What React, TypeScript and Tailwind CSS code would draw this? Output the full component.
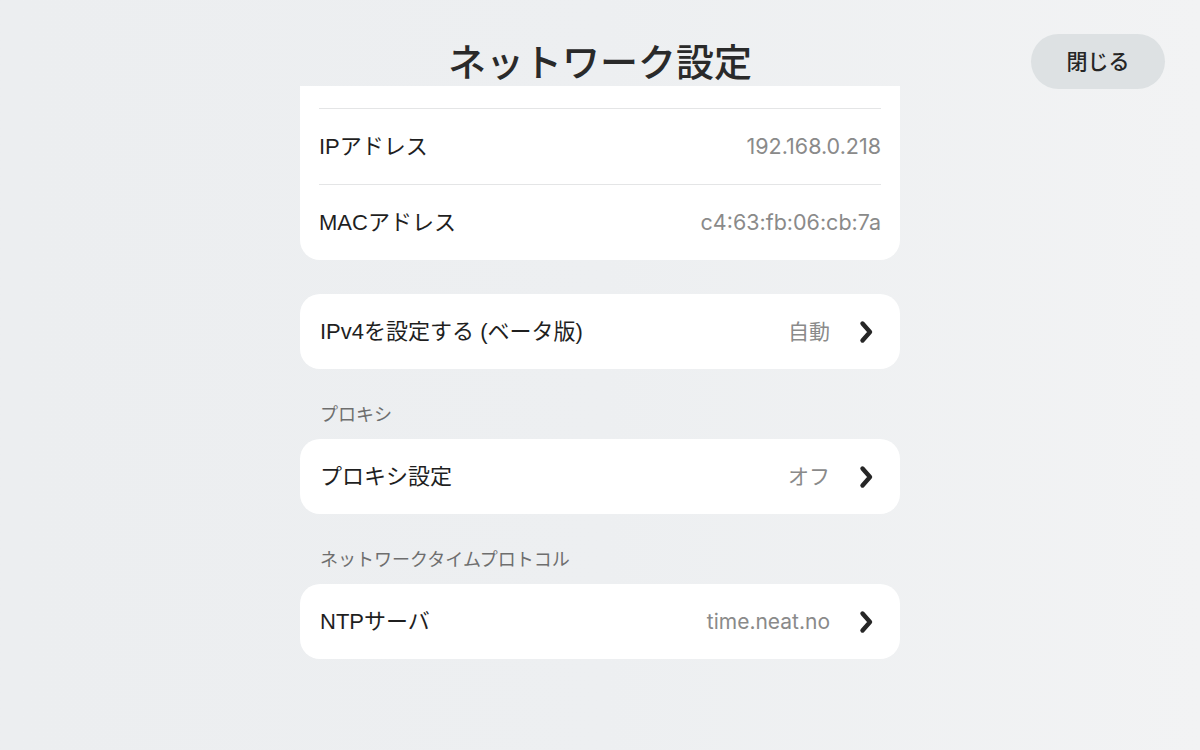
import React from "react";

const font = { fontFamily: '"Liberation Sans", "Noto Sans CJK JP", sans-serif' };
const valueFont = { fontFamily: '"Inter", "Noto Sans CJK JP", sans-serif' };

const Chevron: React.FC = () => (
  <svg width="26" height="26" viewBox="0 0 26 26" className="shrink-0">
    <path
      d="M9.5 4.5 L17 13 L9.5 21.5"
      fill="none"
      stroke="#262626"
      strokeWidth="4.4"
      strokeLinecap="round"
      strokeLinejoin="round"
    />
  </svg>
);

const InfoRow: React.FC<{ label: string; value: string; divider?: boolean }> = ({
  label,
  value,
  divider,
}) => (
  <div className={`flex h-[76px] items-center justify-between ${divider ? "border-t border-[#e4e5e6]" : ""}`}>
    <span className="text-[22px] text-[#1f1f1f]">{label}</span>
    <span className="text-[21.5px] text-[#8a8a8a]" style={valueFont}>
      {value}
    </span>
  </div>
);

const LinkCard: React.FC<{ label: string; value: string }> = ({ label, value }) => (
  <div className="flex h-[75px] items-center justify-between rounded-[20px] bg-white pl-5 pr-[21px]">
    <span className="text-[22px] text-[#1f1f1f]">{label}</span>
    <div className="flex items-center gap-[23px]">
      <span className="text-[21px] text-[#8a8a8a]" style={valueFont}>
        {value}
      </span>
      <Chevron />
    </div>
  </div>
);

const SectionLabel: React.FC<{ children: React.ReactNode }> = ({ children }) => (
  <div className="px-5 pb-[12px] pt-[34px] text-[18px] leading-[24px] text-[#6e6e6e]">{children}</div>
);

export default function App() {
  return (
    <div
      className="h-[750px] w-[1200px] overflow-hidden bg-gradient-to-r from-[#eceef0] via-[#edeff1] to-[#f2f3f4]"
      style={font}
    >
      {/* Header */}
      <div className="relative flex h-[86px] items-end justify-center">
        <h1 className="text-[38px] font-medium leading-[46px] text-[#2a2a2a]">ネットワーク設定</h1>
        <button className="absolute right-[35px] top-[34px] flex h-[55px] w-[134px] items-center justify-center rounded-full bg-[#dde1e3] text-[21px] font-medium text-[#262626]">
          閉じる
        </button>
      </div>

      <div className="mx-auto w-[600px]">
        {/* Scrolled info card (top cut under header) */}
        <div className="rounded-b-[20px] bg-white px-[19px] pt-[22px]">
          <InfoRow label="IPアドレス" value="192.168.0.218" divider />
          <InfoRow label="MACアドレス" value="c4:63:fb:06:cb:7a" divider />
        </div>

        <div className="pt-[34px]">
          <LinkCard label="IPv4を設定する (ベータ版)" value="自動" />
        </div>

        <SectionLabel>プロキシ</SectionLabel>
        <LinkCard label="プロキシ設定" value="オフ" />

        <SectionLabel>ネットワークタイムプロトコル</SectionLabel>
        <LinkCard label="NTPサーバ" value="time.neat.no" />
      </div>
    </div>
  );
}
